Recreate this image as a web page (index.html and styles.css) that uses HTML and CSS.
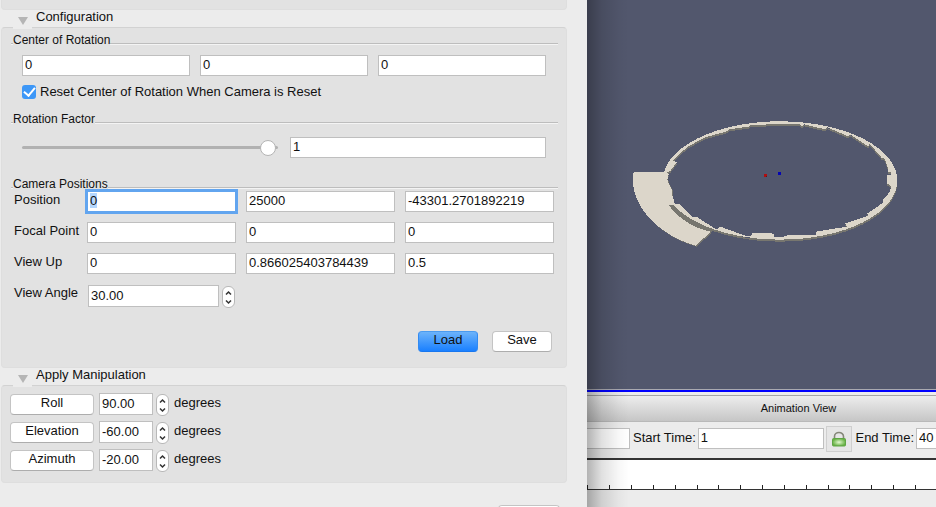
FILE: index.html
```html
<!DOCTYPE html>
<html lang="en">
<head>
<meta charset="utf-8">
<title>Adjust Camera</title>
<link rel="stylesheet" href="styles.css">
</head>
<body>
<svg class="defs" aria-hidden="true">
  <symbol id="up" viewBox="0 0 11 10"><path d="M3 7.500 5.500 5l2.500 2.500" fill="none" stroke="#333" stroke-width="1.500"/></symbol>
  <symbol id="down" viewBox="0 0 11 10"><path d="M3 3.500 5.500 6l2.500-2.500" fill="none" stroke="#333" stroke-width="1.500"/></symbol>
</svg>
<main class="window">
  <section class="dialog">
    <div class="group group-tail"></div>

    <h2 class="group-title"><span class="disclosure"></span>Configuration</h2>
    <div class="group config">
      <h3 class="section-title"><span>Center of Rotation</span></h3>
      <div class="triple">
        <input class="field" type="text" value="0" aria-label="Center X">
        <input class="field" type="text" value="0" aria-label="Center Y">
        <input class="field" type="text" value="0" aria-label="Center Z">
      </div>
      <label class="check-row"><input class="check" type="checkbox" checked>Reset Center of Rotation When Camera is Reset</label>

      <h3 class="section-title"><span>Rotation Factor</span></h3>
      <div class="factor">
        <input class="slider" type="range" min="0" max="100" value="100" aria-label="Rotation factor slider">
        <input class="field" type="text" value="1" aria-label="Rotation factor">
      </div>

      <h3 class="section-title"><span>Camera Positions</span></h3>
      <div class="camera">
        <label for="pos">Position</label>
        <input class="field" id="pos" type="text" value="0" autofocus>
        <input class="field" type="text" value="25000" aria-label="Position Y">
        <input class="field" type="text" value="-43301.2701892219" aria-label="Position Z">
        <label for="focal">Focal Point</label>
        <input class="field" id="focal" type="text" value="0">
        <input class="field" type="text" value="0" aria-label="Focal Point Y">
        <input class="field" type="text" value="0" aria-label="Focal Point Z">
        <label for="up-x">View Up</label>
        <input class="field" id="up-x" type="text" value="0">
        <input class="field" type="text" value="0.866025403784439" aria-label="View Up Y">
        <input class="field" type="text" value="0.5" aria-label="View Up Z">
        <label for="angle">View Angle</label>
        <div class="spin">
          <input class="field" id="angle" type="text" value="30.00">
          <span class="stepper"><button type="button" aria-label="Increase"><svg><use href="#up"/></svg></button><button type="button" aria-label="Decrease"><svg><use href="#down"/></svg></button></span>
        </div>
      </div>
      <div class="actions">
        <button class="btn primary" type="button">Load</button>
        <button class="btn" type="button">Save</button>
      </div>
    </div>

    <h2 class="group-title"><span class="disclosure"></span>Apply Manipulation</h2>
    <div class="group manip">
      <div class="manip-row">
        <button class="btn" type="button">Roll</button>
        <input class="field" id="roll" type="text" value="90.00">
        <span class="stepper"><button type="button" aria-label="Increase"><svg><use href="#up"/></svg></button><button type="button" aria-label="Decrease"><svg><use href="#down"/></svg></button></span>
        <label for="roll">degrees</label>
      </div>
      <div class="manip-row">
        <button class="btn" type="button">Elevation</button>
        <input class="field" id="elevation" type="text" value="-60.00">
        <span class="stepper"><button type="button" aria-label="Increase"><svg><use href="#up"/></svg></button><button type="button" aria-label="Decrease"><svg><use href="#down"/></svg></button></span>
        <label for="elevation">degrees</label>
      </div>
      <div class="manip-row">
        <button class="btn" type="button">Azimuth</button>
        <input class="field" id="azimuth" type="text" value="-20.00">
        <span class="stepper"><button type="button" aria-label="Increase"><svg><use href="#up"/></svg></button><button type="button" aria-label="Decrease"><svg><use href="#down"/></svg></button></span>
        <label for="azimuth">degrees</label>
      </div>
    </div>
    <div class="footer"><button class="btn" type="button" aria-label="Close"></button></div>
  </section>

  <section class="workspace">
    <div class="view">
      <svg class="scene" viewBox="587 0 349 388" preserveAspectRatio="xMidYMin slice" shape-rendering="crispEdges">
        <defs>
          <path id="ring" fill-rule="evenodd" d="M663 180A117 59 0 0 1 897 180A117 59 0 0 1 663 180Z
            M770 124H800L801 126H803L804 124L825 129L827 127L848 136L850 134L868 146L869 143L882 158L884 158L887 165L888 172H891V174L887 175V183L891 186L889 192L883 199V202L867 213L868 215L845 223L847 226L816 231V234L784 235V236H774V233L753 232L751 235H745L723 227L720 226L718 228H715L698 217L697 216L693 217L680 204L678 203L675 203L671 189H667V182L669 174L667 172L671 170L677 162L673 160L687 147L703 138L705 137L727 131L729 129L750 126V125Z"/>
          <path id="flap" d="M634 172H664L672 189L673 206H670Q686 226 711 231L696 245Q664 236 645 212Q630 190 634 172Z"/>
        </defs>
        <rect x="587" width="349" height="388" fill="#52576d"/>
        <g fill="#77766f">
          <use href="#flap" y="1" x="1"/>
          <use href="#ring" y="2"/>
        </g>
        <use href="#flap" fill="#dcd6ca"/>
        <path d="M668 204L674 204Q690 221 718 230L711 231Q686 226 670 206Z" fill="#77766f"/>
        <use href="#ring" fill="#dcd6ca"/>
        <path d="M764 174h3v3h-3z" fill="#b00d10"/><path d="M766 176h1v1h-1z" fill="#5a1820"/>
        <path d="M778 172h3v3h-3z" fill="#0505b4"/>
      </svg>
    </div>
    <h2 class="dock-title">Animation View</h2>
    <div class="toolbar">
      <input class="field mode" type="text" aria-label="Mode">
      <label for="start">Start Time:</label>
      <input class="field start" id="start" type="text" value="1">
      <button class="lock" type="button" aria-label="Lock start time">
        <svg viewBox="0 0 16 16">
          <defs><radialGradient id="g"><stop offset="0" stop-color="#e2f8cf"/><stop offset="1" stop-color="#68b245"/></radialGradient></defs>
          <path d="M3.500 8V5.500a4.500 4 0 0 1 9 0V8" fill="none" stroke="#858779" stroke-width="1.600"/>
          <rect x="1.500" y="7.500" width="13" height="7.500" rx="1" fill="url(#g)" stroke="#5fa544"/>
        </svg>
      </button>
      <label for="end">End Time:</label>
      <input class="field end" id="end" type="text" value="40">
    </div>
    <div class="track">
      <svg viewBox="587 0 349 4" preserveAspectRatio="none" shape-rendering="crispEdges"><path d="M587.500 0v4M609.500 0v4M631.500 0v4M653.500 0v4M675.500 0v4M697.500 0v4M718.500 0v4M740.500 0v4M762.500 0v4M784.500 0v4M806.500 0v4M828.500 0v4M849.500 0v4M871.500 0v4M893.500 0v4M915.500 0v4" stroke="#222"/></svg>
    </div>
    <div class="shade"></div>
  </section>
</main>
<script>
  const position = document.getElementById("pos");
  position.focus();
  position.select();
</script>
</body>
</html>
```
FILE: styles.css
```css
* { box-sizing: border-box; }
body {
  margin: 0;
  background: #ececec;
  color: #111;
  font: 13px/16px "Liberation Sans", Arial, sans-serif;
}
button, input { font: inherit; color: inherit; margin: 0; }
.defs { display: none; }
.window {
  display: grid;
  grid-template-columns: 587fr 349fr;
  height: 100vh;
  overflow: hidden;
}
.dialog { padding: 0 20px 0 1px; overflow: hidden; }

.group {
  background: #e2e2e2;
  border: 1px solid #dedede;
  border-top-color: #d2d2d2;
  border-radius: 4px;
}
.group-tail { height: 10px; border-top: 0; border-radius: 0 0 4px 4px; }
.group-title {
  display: flex;
  gap: 7px;
  height: 17px;
  margin: 0;
  padding-left: 12px;
  font-size: 13px;
  font-weight: normal;
  line-height: 14px;
}
.disclosure {
  display: flex;
  justify-content: center;
  width: 19px;
  height: 19px;
  padding-top: 7px;
  margin-right: -3px;
  background: #ececec;
  z-index: 1;
}
.disclosure::before {
  content: "";
  height: 0;
  border: 5px solid transparent;
  border-top: 8px solid #b5b5b5;
  border-bottom: 0;
}

.config { padding: 6px 8px 15px 9px; }
.section-title {
  height: 14px;
  margin: 0;
  padding-left: 2px;
  font-size: 12px;
  font-weight: normal;
  line-height: 12px;
  background: linear-gradient(#bdbdbd 50%, #f4f4f4 50%) 0 9px / 100% 2px no-repeat;
}
.section-title span { background: #e2e2e2; }
.field {
  width: 100%;
  min-width: 0;
  height: 21px;
  padding: 0 2px 2px;
  border: 1px solid #bfbfbf;
  border-radius: 0;
  background: #fff;
  outline: 0;
}
.field:focus { border-color: #62a5ef; box-shadow: 0 0 0 2px #62a5ef; }
.field::selection { background: #b3d7ff; color: #111; }
.triple {
  display: grid;
  grid-template-columns: repeat(3, 1fr);
  gap: 10px;
  padding: 7px 12px 8px 11px;
}
.check-row {
  display: flex;
  align-items: center;
  gap: 4px;
  height: 15px;
  margin: 0 0 14px 11px;
}
.check {
  appearance: none;
  width: 14px;
  height: 14px;
  border-radius: 3px;
  background: #3d97f7;
  display: grid;
  place-items: center;
}
.check::before {
  content: "";
  width: 5px;
  height: 9px;
  margin-bottom: 2px;
  border: solid #fff;
  border-width: 0 2px 2px 0;
  transform: rotate(40deg);
}
.factor {
  display: grid;
  grid-template-columns: 1fr 1fr;
  gap: 12px;
  align-items: center;
  padding: 10px 12px 20px 11px;
}
.slider { appearance: none; height: 17px; width: 100%; background: none; }
.slider::-webkit-slider-runnable-track {
  height: 3px;
  padding-right: 2px;
  border-radius: 2px;
  background: #b1b1b1;
}
.slider::-webkit-slider-thumb {
  appearance: none;
  width: 16px;
  height: 16px;
  margin-top: -6px;
  border: 1px solid #b4b4b4;
  border-radius: 50%;
  background: #fff;
}
.camera {
  display: grid;
  grid-template-columns: 63px repeat(3, 1fr);
  column-gap: 10px;
  row-gap: 10px;
  margin-top: -1px;
  padding: 0 4px 0 3px;
}
.camera label { white-space: nowrap; line-height: 18px; }
.spin { display: flex; gap: 3px; padding: 1px 1px 0; }
.spin .field, .manip .field { height: 22px; padding-bottom: 1px; }
.stepper {
  display: flex;
  flex: none;
  flex-direction: column;
  width: 13px;
  height: 22px;
  margin-top: 1px;
  border: 1px solid #b8b8b8;
  border-radius: 6px;
  background: #fff;
}
.stepper button { flex: 1; height: 10px; padding: 0; border: 0; background: none; }
.stepper svg { display: block; width: 11px; height: 10px; }
.actions { display: flex; justify-content: flex-end; gap: 14px; padding: 23px 6px 0 0; }
.btn {
  width: 60px;
  height: 21px;
  padding: 0 0 3px;
  border: 1px solid #c4c4c4;
  border-bottom-color: #adadad;
  border-radius: 4px;
  background: #fff;
}
.primary {
  border-color: #4a9bf0 #318af2 #1877ef;
  background: linear-gradient(#6cb3fa, #1a80ff);
}

.manip { display: grid; gap: 6px; padding: 7px 8px 11px; }
.manip-row { display: flex; height: 22px; }
.manip-row .btn { width: 84px; margin: 1px 5px 0 0; }
.manip-row .field { width: 54px; }
.manip-row .stepper { margin: 1px 5px 0 3px; }
.manip-row label { line-height: 20px; }
.footer { display: flex; justify-content: flex-end; padding: 22px 7px 0 0; }
.footer .btn { width: 62px; }

.workspace {
  position: relative;
  display: grid;
  grid-template-rows: 1fr 30px 36px 32px 17px;
  min-width: 0;
  overflow: hidden;
}
.view {
  min-height: 0;
  border-bottom: 2px solid #00f;
  background: #a9a9b0;
}
.scene { display: block; width: 100%; height: calc(100% - 1px); }
.dock-title {
  margin: 3px 0 0;
  padding-left: 74px;
  border: solid #a6a6a6;
  border-width: 1px 0;
  border-bottom-color: #b9b9b9;
  background: linear-gradient(#ededed, #c6c6c6);
  font-size: 11px;
  font-weight: normal;
  line-height: 24px;
  text-align: center;
}
.toolbar {
  display: flex;
  align-items: flex-start;
  gap: 2px;
  padding-top: 6px;
  white-space: nowrap;
}
.toolbar label { padding-left: 1px; line-height: 20px; }
.toolbar .mode { flex: 0 0 43px; border-left: 0; }
.toolbar .start { flex: 1; }
.toolbar .end { flex: 0 0 20px; border-right: 0; }
.lock {
  flex: none;
  width: 26px;
  height: 26px;
  margin-top: -2px;
  padding: 4px;
  border: 1px solid #cfcfcf;
  background: #e6e6e6;
}
.lock svg { display: block; width: 16px; height: 16px; }
.track {
  display: flex;
  align-items: flex-end;
  border: solid #333;
  border-width: 2px 0 1px;
  background: #fff;
}
.track svg { width: 100%; height: 4px; }
.shade {
  position: absolute;
  inset: 0 auto 0 0;
  width: 42px;
  background: linear-gradient(90deg, rgba(0,0,0,.3), rgba(0,0,0,.12) 35%, rgba(0,0,0,.03) 75%, transparent);
  pointer-events: none;
}
```
